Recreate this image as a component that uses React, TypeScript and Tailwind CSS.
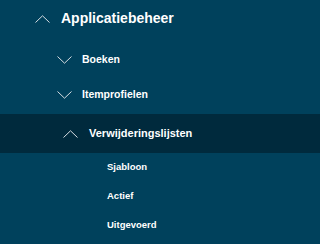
import React from 'react';

function Chevron({ up }: { up?: boolean }) {
  return (
    <svg width="15" height="8" viewBox="0 0 15 8" className="shrink-0">
      <path
        d={up ? 'M0.5 7.5 L7.5 0.8 L14.5 7.5' : 'M0.5 0.5 L7.5 7.2 L14.5 0.5'}
        fill="none"
        stroke="#d5dde2"
        strokeWidth="1"
      />
    </svg>
  );
}

const font = { fontFamily: '"Liberation Sans", Arial, sans-serif' };

export default function App() {
  return (
    <div className="w-full min-w-[261px] min-h-screen bg-[#00415c] text-white overflow-hidden" style={font}>
      <div className="h-[37px] flex items-center pl-[35px] gap-[11px]">
        <Chevron up />
        <span className="text-[14px] font-bold">Applicatiebeheer</span>
      </div>

      <div className="mt-[5px] h-[35px] flex items-center pl-[57px] gap-[10px]">
        <Chevron />
        <span className="text-[10.5px] font-bold">Boeken</span>
      </div>
      <div className="h-[36px] flex items-center pl-[57px] gap-[10px]">
        <Chevron />
        <span className="text-[10.5px] font-bold">Itemprofielen</span>
      </div>

      <div className="mt-[1px] h-[39px] flex items-center pl-[63px] gap-[11px] bg-[#002a3d]">
        <Chevron up />
        <span className="text-[11px] font-bold">Verwijderingslijsten</span>
      </div>

      <ul className="pl-[107px]">
        <li className="h-[29px] flex items-center text-[9.5px] font-bold">Sjabloon</li>
        <li className="h-[29px] flex items-center text-[9.5px] font-bold">Actief</li>
        <li className="h-[29px] flex items-center text-[9.5px] font-bold">Uitgevoerd</li>
      </ul>
    </div>
  );
}
